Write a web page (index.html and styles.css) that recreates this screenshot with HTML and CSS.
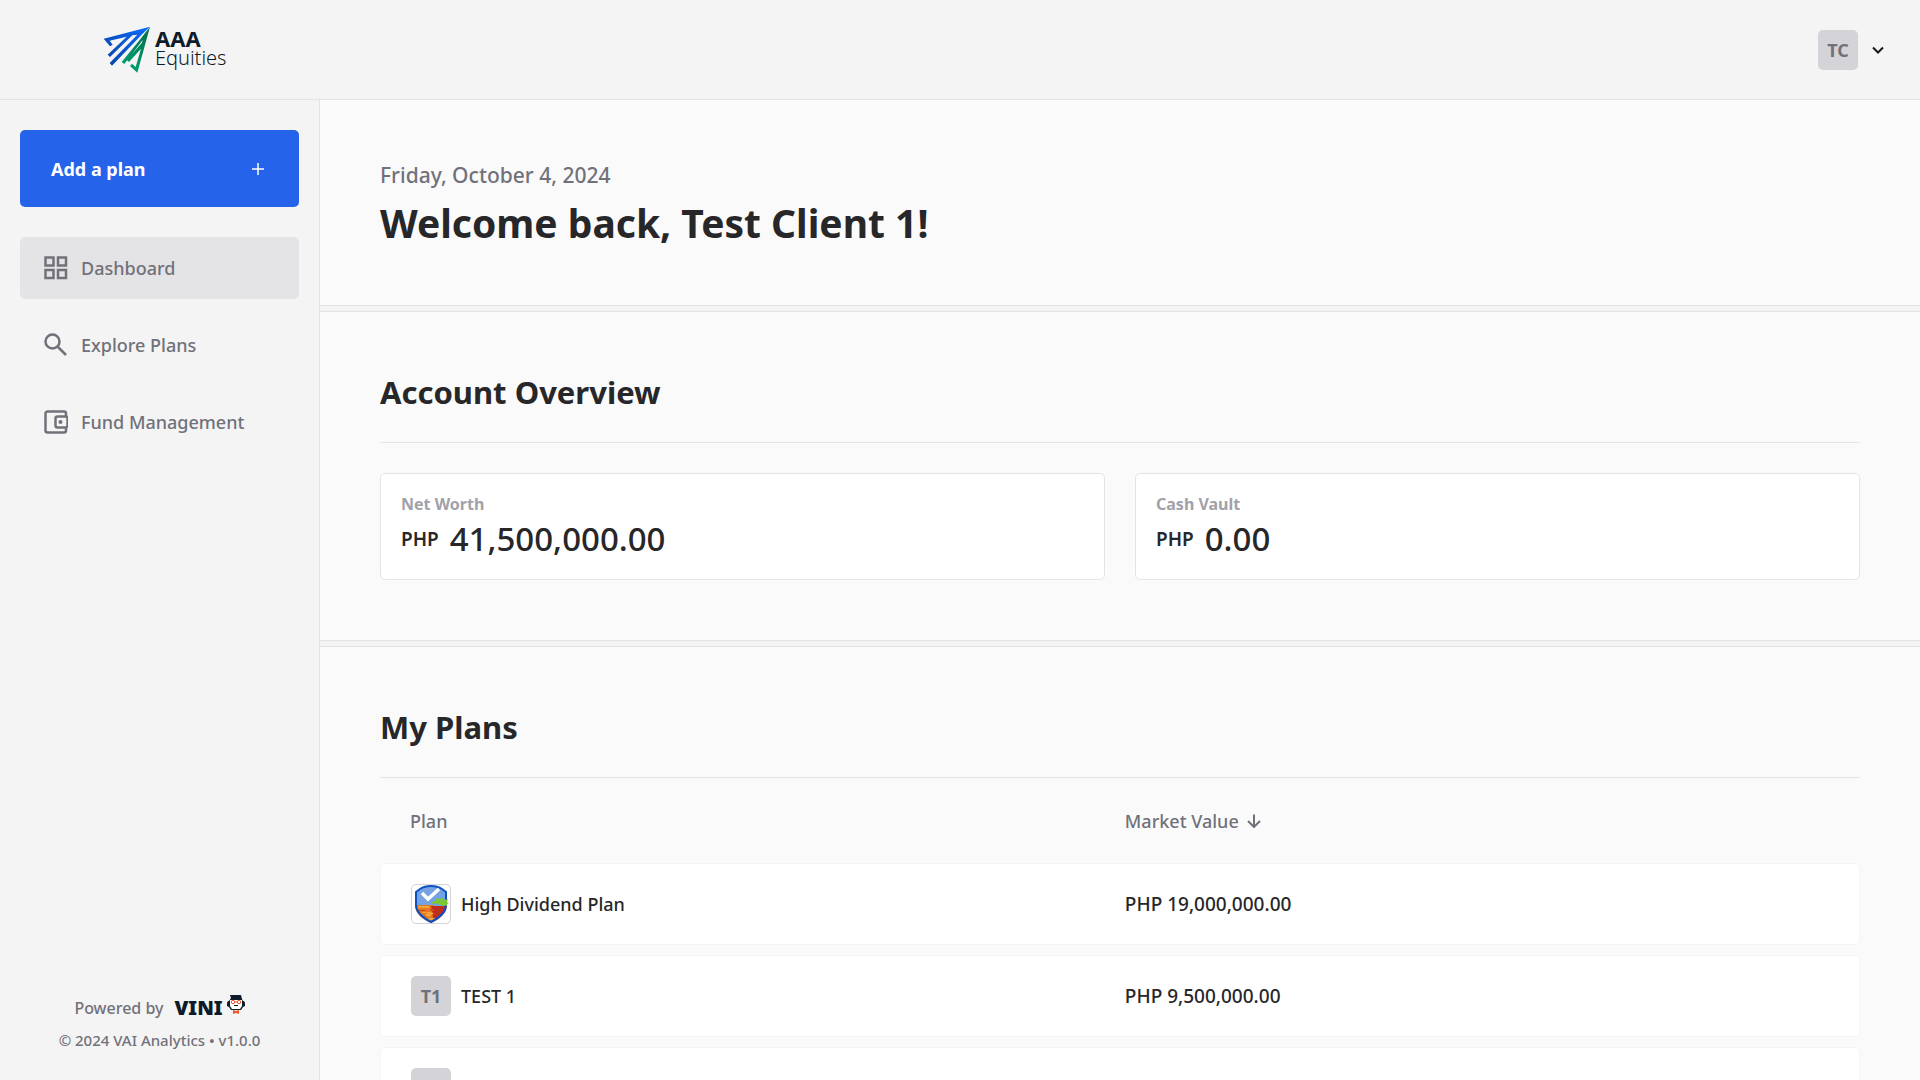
FILE: index.html
```html
<!DOCTYPE html>
<html lang="en">
<head>
<meta charset="utf-8">
<meta name="viewport" content="width=device-width, initial-scale=1">
<title>Dashboard - AAA Equities</title>
<link rel="stylesheet" href="styles.css">
</head>
<body>
<header class="topbar">
  <a class="brand" href="#">
    <svg class="brand-mark" viewBox="40 34 144 144" aria-hidden="true">
      <defs>
        <linearGradient id="blue" gradientUnits="userSpaceOnUse" x1="50" y1="150" x2="180" y2="40"><stop offset="0" stop-color="#0a44a8"/><stop offset="1" stop-color="#0a6cff"/></linearGradient>
        <linearGradient id="green" gradientUnits="userSpaceOnUse" x1="110" y1="160" x2="175" y2="60"><stop offset="0" stop-color="#00a070"/><stop offset="1" stop-color="#007350"/></linearGradient>
      </defs>
      <path fill="url(#blue)" d="M181 36 42 72 61 95 69 90 60 78 111 66 54 120 61 127 128 62 143 60 60 145 67 153 158 58z"/>
      <path fill="url(#green)" d="M181 36 143 174 121 154 127 147 138 157 154 102 118 142 111 136 157 84 159 76 104 148 96 142 150 76z"/>
    </svg>
    <span class="brand-name"><span class="brand-top">AAA</span><span class="brand-sub">Equities</span></span>
  </a>
  <button class="account" type="button" aria-label="Account menu">
    <span class="avatar">TC</span>
    <svg class="chevron" viewBox="0 0 14 14" aria-hidden="true"><path d="M2 4.500 7 9.500 12 4.500"/></svg>
  </button>
</header>
<div class="shell">
  <aside class="sidebar">
    <button class="add-plan" type="button">Add a plan
      <svg class="plus" viewBox="0 0 14 14" aria-hidden="true"><path d="M7 1v12M1 7h12"/></svg>
    </button>
    <nav class="nav">
      <a class="nav-item active" href="#">
        <svg viewBox="0 0 24 24" aria-hidden="true"><path class="line" d="M1.500 1.500h8v8h-8zM14 1.500h8v8h-8zM1.500 14h8v8h-8zM14 14h8v8h-8z"/></svg>Dashboard</a>
      <a class="nav-item" href="#">
        <svg viewBox="0 0 24 24" aria-hidden="true"><circle class="line" cx="8.500" cy="8.500" r="7"/><path class="line" d="m14 14 8 8"/></svg>Explore Plans</a>
      <a class="nav-item" href="#">
        <svg viewBox="0 0 24 24" aria-hidden="true"><path class="line" d="M22 6V3.500a2 2 0 0 0-2-2H3.500a2 2 0 0 0-2 2v17a2 2 0 0 0 2 2H20a2 2 0 0 0 2-2V18"/><rect class="line" x="11.500" y="6.500" width="12" height="11" rx="2"/><circle class="dot" cx="16.500" cy="12" r="2"/></svg>Fund Management</a>
    </nav>
    <footer class="credits">
      <p class="powered">Powered by
        <a class="vini" href="#">VINI<svg viewBox="0 0 18 20" aria-hidden="true">
          <path fill="#0d1b2a" d="M3 1h11l1 4 1 2h1l1 2v3l-2 1-2 3H4l-2-3-2-1V9l1-2h1l2-3z"/>
          <path fill="#fff" d="M3 6h12v6l-2 3H5l-2-3z"/>
          <g fill="none" stroke="#f0562b"><circle cx="6" cy="8" r="1.700"/><circle cx="12" cy="8" r="1.700"/><path d="M7.500 8h3"/></g>
          <path fill="#0d1b2a" d="M7 11h4v1H7z"/>
          <path fill="#f0562b" d="m6 16 3 1 3-1v4l-3-1-3 1z"/>
        </svg></a>
      </p>
      <p class="copyright">© 2024 VAI Analytics • v1.0.0</p>
    </footer>
  </aside>
  <main class="content">
    <section class="panel greeting">
      <p class="date">Friday, October 4, 2024</p>
      <h1>Welcome back, Test Client 1!</h1>
    </section>
    <section class="panel">
      <h2>Account Overview</h2>
      <div class="cards">
        <div class="card"><p class="label">Net Worth</p><p class="amount"><span class="currency">PHP</span>41,500,000.00</p></div>
        <div class="card"><p class="label">Cash Vault</p><p class="amount"><span class="currency">PHP</span>0.00</p></div>
      </div>
    </section>
    <section class="panel plans">
      <h2>My Plans</h2>
      <table>
        <thead>
          <tr><th scope="col">Plan</th><th scope="col"><button class="sort" type="button">Market Value<svg viewBox="0 0 14 14" aria-hidden="true"><path d="M7 .500v12M1 7l6 6 6-6"/></svg></button></th></tr>
        </thead>
        <tbody>
          <tr><td><div class="plan"><span class="avatar picture">
            <svg viewBox="0 0 38 38" aria-hidden="true">
              <defs><clipPath id="shield"><path d="M19 1c5 0 8 1 11 4l5 2v13c0 8-7 14-16 18C10 34 3 28 3 20V7l5-2c3-3 6-4 11-4z"/></clipPath></defs>
              <g clip-path="url(#shield)">
                <path fill="#75a2e2" d="M0 0h38v22H0z"/><path fill="#e8781f" d="M0 20h22v18H0z"/><path fill="#bf2d1c" d="M19 21h19v10l-16 7z"/>
                <path fill="#f3a338" d="M6 21h11v2H6zM10 27h8v1h-8zM17 27l5 1-5 4-4-2zM16 33h8v2h-8z"/>
                <path fill="#cf4d1b" d="M5 25h8v1H5zM8 31h5v1H8zM18 24h4v2h-4z"/>
              </g>
              <path fill="none" stroke="#0b51c2" stroke-width="2" d="M19 1c5 0 8 1 11 3l4 3v13c0 8-7 13-15 17C11 33 4 28 4 20V7l4-3c3-2 6-3 11-3z"/>
              <path fill="#7cc832" d="m20 17 3-1 2-3 3 1 3-1 1 2 4-1-1 3 2 1-2 1v2l-3-1-2 1-2-2-3 1-1-2-4 1z"/>
              <path fill="none" stroke="#fff" stroke-width="3.500" d="m10 8 6 6L27 4"/>
            </svg></span>High Dividend Plan</div></td><td>PHP 19,000,000.00</td></tr>
          <tr><td><div class="plan"><span class="avatar">T1</span>TEST 1</div></td><td>PHP 9,500,000.00</td></tr>
          <tr><td><div class="plan"><span class="avatar"></span></div></td><td></td></tr>
        </tbody>
      </table>
    </section>
  </main>
</div>
</body>
</html>
```
FILE: styles.css
```css
*, *::before, *::after { box-sizing: border-box; }
body {
  margin: 0;
  height: 100vh;
  display: flex;
  flex-direction: column;
  background: #f4f4f4;
  color: #27272a;
  font: 500 18px/28px "Noto Sans", sans-serif;
}
h1, h2, p { margin: 0; }
a { color: inherit; text-decoration: none; }
button { border: 0; background: none; padding: 0; font: inherit; color: inherit; cursor: pointer; }
svg { display: block; flex: none; }

.topbar {
  flex: none;
  height: 100px;
  padding: 0 35px 0 103px;
  display: flex;
  align-items: center;
  justify-content: space-between;
  border-bottom: 1px solid #e4e4e7;
}
.brand { display: flex; align-items: center; gap: 4px; color: #0d1b2a; }
.brand-mark { width: 48px; height: 48px; }
.brand-name { display: flex; flex-direction: column; padding-bottom: 4px; }
.brand-top { font-size: 22px; line-height: 19px; font-weight: 700; }
.brand-sub { font-size: 20px; line-height: 19px; font-weight: 300; }
.account { display: flex; align-items: center; gap: 13px; }
.avatar {
  flex: none;
  width: 40px;
  height: 40px;
  border-radius: 5px;
  background: #d4d4d8;
  color: #71717a;
  font-weight: 700;
  display: flex;
  align-items: center;
  justify-content: center;
}
.picture { border: 1px solid #d4d4d8; background: #fff; }
.picture svg { width: 38px; height: 38px; }
.chevron { width: 14px; height: 14px; fill: none; stroke: #18181b; stroke-width: 2; }

.shell { flex: 1; min-height: 0; display: flex; }
.sidebar {
  flex: none;
  width: 320px;
  padding: 30px 20px 24px;
  border-right: 1px solid #e4e4e7;
  display: flex;
  flex-direction: column;
  gap: 30px;
}
.add-plan {
  display: flex;
  align-items: center;
  justify-content: space-between;
  height: 77px;
  padding: 0 34px 0 31px;
  border-radius: 5px;
  background: #2563eb;
  color: #fff;
  font-weight: 700;
}
.plus { width: 14px; height: 14px; fill: none; stroke: #fff; stroke-width: 1.500; }
.nav { display: flex; flex-direction: column; gap: 15px; color: #71717a; }
.nav-item { display: flex; align-items: center; gap: 13px; height: 62px; padding: 0 24px; border-radius: 5px; }
.active { background: #e4e4e6; }
.nav-item svg { width: 24px; height: 24px; }
.line { fill: none; stroke: #71717a; stroke-width: 2.500; }
.dot { fill: #71717a; }
.credits { margin-top: auto; text-align: center; color: #71717a; font-size: 16px; }
.powered { display: flex; align-items: center; justify-content: center; gap: 11px; height: 32px; }
.vini { display: flex; align-items: center; gap: 4px; color: #0d1b2a; font-size: 20px; font-weight: 900; }
.vini svg { width: 18px; height: 20px; align-self: flex-start; }
.copyright { font-size: 15px; line-height: 32px; }

.content { flex: 1; min-width: 0; overflow: auto; scrollbar-width: none; }
.panel { padding: 60px; background: #fafafa; border-bottom: 1px solid #e4e4e7; }
.panel + .panel { margin-top: 5px; border-top: 1px solid #e4e4e7; }
.date { color: #71717a; font-size: 21px; line-height: 30px; }
h1 { padding-top: 10px; font-size: 39px; line-height: 45px; font-weight: 700; }
h2 { padding-bottom: 30px; border-bottom: 1px solid #e4e4e7; font-size: 31px; line-height: 40px; font-weight: 700; }
.cards { display: grid; grid-template-columns: 1fr 1fr; gap: 30px; margin-top: 30px; }
.card { height: 107px; padding: 20px; border: 1px solid #e4e4e7; border-radius: 5px; background: #fff; }
.label { color: #a1a1aa; font-size: 16px; line-height: 20px; font-weight: 700; }
.amount { display: flex; align-items: center; gap: 11px; font-size: 33px; line-height: 50px; }
.currency { font-size: 19px; font-weight: 600; }

table { width: 100%; table-layout: fixed; border-collapse: separate; border-spacing: 0 10px; }
th { height: 65px; padding: 0 30px; text-align: left; font-weight: 500; color: #71717a; }
th:first-child { width: 48.300%; }
.sort { display: flex; align-items: center; gap: 8px; }
.sort svg { width: 14px; height: 14px; fill: none; stroke: #71717a; stroke-width: 2; }
td { height: 82px; padding: 0 30px; background: #fff; border: solid #f4f4f5; border-width: 1px 0; }
td:first-child { border-left-width: 1px; border-radius: 5px 0 0 5px; }
td:last-child { border-right-width: 1px; border-radius: 0 5px 5px 0; font-size: 19px; }
.plan { display: flex; align-items: center; gap: 10px; }
```
